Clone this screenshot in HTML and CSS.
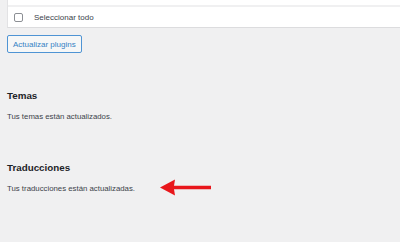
FILE: index.html
```html
<!DOCTYPE html>
<html lang="es">
<head>
    <meta charset="UTF-8">
    <meta name="viewport" content="width=device-width, initial-scale=1.0">
    <title>Actualizaciones</title>
    <link rel="stylesheet" href="styles.css">
</head>
<body>
    <div class="wrap">
        <div class="plugin-table">
            <div class="row-stub"></div>
            <label class="row-select">
                <span class="checkbox"></span>
                <span>Seleccionar todo</span>
            </label>
        </div>
        <button type="button" class="button">Actualizar plugins</button>

        <h2 class="first">Temas</h2>
        <p>Tus temas están actualizados.</p>

        <h2>Traducciones</h2>
        <p>Tus traducciones están actualizadas.</p>
    </div>

    <!-- red pointer arrow drawn over the screenshot -->
    <svg class="arrow" width="56" height="20" viewBox="0 0 56 20">
        <polygon points="1,9.5 16,1.5 15,7.8 52,7.8 52,11.2 15,11.2 16,17.5" fill="#e8161b"/>
    </svg>
</body>
</html>
```

FILE: styles.css
```css
body {
    margin: 0;
    background-color: #f0f0f1;
    color: #3c434a;
    font-family: "Liberation Sans", Arial, sans-serif;
    position: relative;
    height: 242px;
}
.wrap {
    padding-left: 7px;
}
.plugin-table {
    background: #fff;
    border-left: 1px solid #e2e2e4;
    border-bottom: 1px solid #dcdcde;
}
.row-stub {
    height: 5px;
    border-bottom: 2px solid #f0f0f1;
}
.row-select {
    display: flex;
    align-items: center;
    height: 20px;
    padding-left: 6px;
    font-size: 8px;
    color: #3c434a;
}
.checkbox {
    width: 7px;
    height: 7px;
    border: 1px solid #8c8f94;
    border-radius: 2px;
    margin-right: 11px;
    margin-top: 1px;
}
.button {
    display: block;
    margin-top: 7px;
    height: 18px;
    padding: 0 5px;
    white-space: nowrap;
    background: #f6f7f7;
    color: #3582c4;
    border: 1px solid #4f94d4;
    border-radius: 2px;
    font-family: "Liberation Sans", Arial, sans-serif;
    font-size: 8px;
    cursor: pointer;
}
h2 {
    margin: 39px 0 0;
    font-size: 9.8px;
    font-weight: 700;
    color: #1d2327;
    line-height: 14px;
}
h2.first {
    margin-top: 36px;
}
p {
    margin: 9px 0 0;
    font-size: 7.8px;
    line-height: 10px;
}
.arrow {
    display: block;
    position: absolute;
    left: 159px;
    top: 178px;
    overflow: visible;
}
```
